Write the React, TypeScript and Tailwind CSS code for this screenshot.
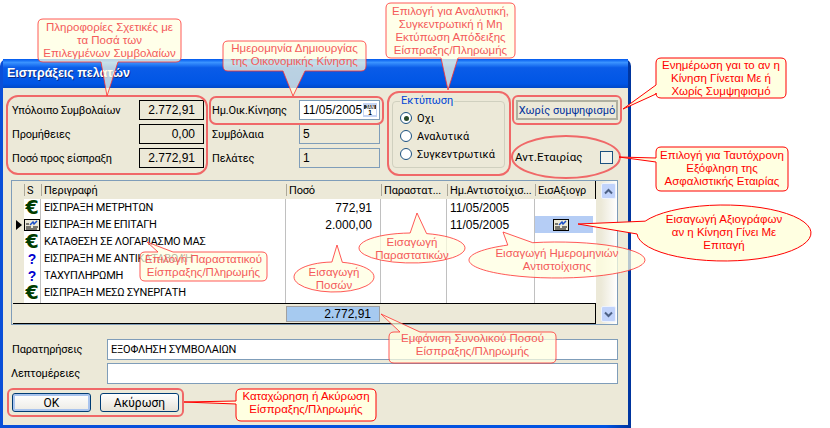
import React from 'react';

const FONT = "font-['Roboto','Liberation_Sans',sans-serif]";
const NUM = "font-['Liberation_Sans',Arial,sans-serif] text-[12px] tracking-normal";

type Side = 't' | 'b' | 'l';

// rounded box with a pointer, drawn as one outline
const box = (x1: number, y1: number, x2: number, y2: number, side: Side, b1: number, b2: number, ax: number, ay: number) => {
  const r = 5;
  const top = side === 't' ? `H${b1} L${ax},${ay} L${b2},${y1} ` : '';
  const bottom = side === 'b' ? `H${b2} L${ax},${ay} L${b1},${y2} ` : '';
  const left = side === 'l' ? `V${b2} L${ax},${ay} L${x1},${b1} ` : '';
  return `M${x1 + r},${y1} ${top}H${x2 - r} Q${x2},${y1} ${x2},${y1 + r} V${y2 - r} Q${x2},${y2} ${x2 - r},${y2} ${bottom}H${x1 + r} Q${x1},${y2} ${x1},${y2 - r} ${left}V${y1 + r} Q${x1},${y1} ${x1 + r},${y1} Z`;
};

// ellipse whose pointer leaves between angles a1 and a2 (degrees, clockwise on screen)
const oval = (cx: number, cy: number, rx: number, ry: number, a1: number, a2: number, ax: number, ay: number) => {
  const pt = (a: number) => `${cx + rx * Math.cos((a * Math.PI) / 180)},${cy + ry * Math.sin((a * Math.PI) / 180)}`;
  return `M${pt(a2)} A${rx},${ry} 0 1 1 ${pt(a1)} L${ax},${ay} Z`;
};

const softShapes = [
  box(38, 19, 181, 62, 'b', 101, 118, 107, 96),
  box(223, 41, 366, 71, 'b', 283, 305, 293, 96),
  box(386, 3, 515, 58, 'b', 441, 458, 448, 90),
  box(140, 252, 267, 281, 't', 158, 173, 147, 242),
  box(389, 332, 556, 363, 't', 400, 420, 381, 314),
  oval(412, 248, 53, 15, 268, 286, 417, 213),
  oval(334, 277, 40, 15, 267, 282, 337, 245),
  oval(557, 260, 88, 18, 236, 254, 503, 232),
];

const hardShapes = [
  box(656, 58, 786, 98, 'l', 85, 94, 623, 109),
  box(656, 147, 788, 191, 'l', 158, 162, 619, 157),
  box(236, 389, 376, 421, 'l', 401, 404, 184, 402),
  oval(724, 233, 87, 28, 178, 205, 578, 224),
];

const notes = [
  { pos: 'left-[38px] top-[21px] w-[143px]', soft: true, lines: ['Πληροφορίες Σχετικές με', 'τα Ποσά των', 'Επιλεγμένων Συμβολαίων'] },
  { pos: 'left-[223px] top-[42px] w-[143px]', soft: true, lines: ['Ημερομηνία Δημιουργίας', 'της Οικονομικής Κίνησης'] },
  { pos: 'left-[386px] top-[5px] w-[129px]', soft: true, lines: ['Επιλογή για Αναλυτική,', 'Συγκεντρωτική ή Μη', 'Εκτύπωση Απόδειξης', 'Είσπραξης/Πληρωμής'] },
  { pos: 'left-[656px] top-[59px] w-[130px]', soft: false, lines: ['Ενημέρωση γαι το αν η', 'Κίνηση Γίνεται Με ή', 'Χωρίς Συμψηφισμό'] },
  { pos: 'left-[656px] top-[149px] w-[132px]', soft: false, lines: ['Επιλογή για Ταυτόχρονη', 'Εξόφληση της', 'Ασφαλιστικής Εταιρίας'] },
  { pos: 'left-[637px] top-[213px] w-[174px]', soft: false, lines: ['Εισαγωγή Αξιογράφων', 'αν η Κίνηση Γίνει Με', 'Επιταγή'] },
  { pos: 'left-[469px] top-[247px] w-[176px]', soft: true, lines: ['Εισαγωγή Ημερομηνιών', 'Αντιστοίχισης'] },
  { pos: 'left-[359px] top-[236px] w-[106px]', soft: true, lines: ['Εισαγωγή', 'Παραστατικών'] },
  { pos: 'left-[294px] top-[266px] w-[80px]', soft: true, lines: ['Εισαγωγή', 'Ποσών'] },
  { pos: 'left-[140px] top-[253px] w-[127px]', soft: true, lines: ['Επιλογή Παραστατικού', 'Είσπραξης/Πληρωμής'] },
  { pos: 'left-[389px] top-[332px] w-[167px]', soft: true, lines: ['Εμφάνιση Συνολικού Ποσού', 'Είσπραξης/Πληρωμής'] },
  { pos: 'left-[236px] top-[390px] w-[140px]', soft: false, lines: ['Καταχώρηση ή Ακύρωση', 'Είσπραξης/Πληρωμής'] },
];

const rows = [
  { icon: 'euro', name: 'ΕΙΣΠΡΑΞΗ ΜΕΤΡΗΤΩΝ', amount: '772,91', date: '11/05/2005' },
  { icon: 'check', name: 'ΕΙΣΠΡΑΞΗ ΜΕ ΕΠΙΤΑΓΗ', amount: '2.000,00', date: '11/05/2005', current: true },
  { icon: 'euro', name: 'ΚΑΤΑΘΕΣΗ ΣΕ ΛΟΓΑΡΙΑΣΜΟ ΜΑΣ' },
  { icon: 'help', name: 'ΕΙΣΠΡΑΞΗ ΜΕ ΑΝΤΙΚΑΤΑΒΟΛΗ' },
  { icon: 'help', name: 'ΤΑΧΥΠΛΗΡΩΜΗ' },
  { icon: 'euro', name: 'ΕΙΣΠΡΑΞΗ ΜΕΣΩ ΣΥΝΕΡΓΑΤΗ' },
];

const CheckIcon = () => (
  <svg width="16" height="12" viewBox="0 0 16 12" className="block shrink-0">
    <rect x="0.5" y="0.5" width="15" height="11" fill="#ece9d8" stroke="#000" />
    <path d="M2 8h5M2 10h11M9 8h5M2 5h3" stroke="#000" />
    <path d="M6 6l3-3 1 2 3-3" stroke="#1d50c8" strokeWidth="1.5" fill="none" />
  </svg>
);

const CalendarIcon = () => (
  <svg width="14" height="14" viewBox="0 0 14 14" className="block shrink-0">
    <rect width="14" height="14" fill="#c5d5f5" />
    <rect x="1" y="2" width="12" height="10" fill="#fff" />
    <rect x="1" y="2" width="12" height="4" fill="#333" />
    <text x="7" y="5.6" textAnchor="middle" fontSize="4.5" fontWeight="700" fill="#fff" fontFamily="Liberation Sans">JAN</text>
    <text x="7" y="11.6" textAnchor="middle" fontSize="6.5" fontWeight="700" fill="#000" fontFamily="Liberation Sans">1</text>
  </svg>
);

const ValueRow = ({ label, value }: { label: string; value: string }) => (
  <div className="flex h-[20px] items-center justify-between">
    <span>{label}</span>
    <div className={`${NUM} flex h-[20px] w-[65px] items-center justify-end border border-black pr-[8px]`}>{value}</div>
  </div>
);

const InfoRow = ({ label, value }: { label: string; value: string }) => (
  <div className="flex h-[20px] items-center justify-between">
    <span>{label}</span>
    <div className={`${NUM} flex h-[20px] w-[81px] items-center border border-[#7f9db9] pl-[3px]`}>{value}</div>
  </div>
);

const Radio = ({ label, on }: { label: string; on?: boolean }) => (
  <div className="flex h-[18px] items-center gap-[5px] pl-[7px] tracking-normal">
    <div className="flex h-[12px] w-[12px] items-center justify-center rounded-full border border-[#1c5180] bg-white">
      {on && <div className="h-[5px] w-[5px] rounded-full bg-[#2a4a2a]" />}
    </div>
    <span>{label}</span>
  </div>
);

const HeadCell = ({ label }: { label: string }) => (
  <div className="flex h-full min-w-0 items-center whitespace-nowrap">
    <div className="mr-[2px] h-[12px] w-[1px] shrink-0 bg-[#aca899]" />
    {label}
  </div>
);

const ScrollButton = ({ up }: { up?: boolean }) => (
  <div className="flex h-[16px] w-[15px] items-center justify-center rounded-[2px] border border-[#eef3fd] bg-[#c1d3fb]">
    <svg width="9" height="7" viewBox="0 0 9 7">
      <path d={up ? 'M1 5.5L4.5 2L8 5.5' : 'M1 1.5L4.5 5L8 1.5'} stroke="#4d6185" strokeWidth="2" fill="none" />
    </svg>
  </div>
);

const App: React.FC = () => {
  return (
    <div className={`${FONT} relative h-[428px] w-[830px] overflow-hidden bg-white pt-[59px] text-[11px] leading-none tracking-[-0.2px] text-black`}>
      {/* παράθυρο */}
      <div className="flex h-[369px] w-[631px] flex-col rounded-t-[7px] bg-[linear-gradient(90deg,#0a4fd8_0%,#0054e3_96%,#00349c_100%)] px-[3px] pb-[3px]">
        <div className="flex h-[29px] shrink-0 items-center bg-[linear-gradient(180deg,#0058ee_0%,#3a93ff_12%,#0a5ce8_30%,#0055e5_85%,#0048c8_100%)] pl-[4px] font-['Liberation_Sans'] text-[12.5px] font-bold tracking-normal text-white [text-shadow:1px_1px_0_#0a2a80]">
          Εισπράξεις πελατών
        </div>
        <div className="flex flex-1 flex-col bg-[#ece9d8]">
          <div className="flex pl-[9px] pt-[12px]">
            <div className="flex w-[192px] flex-col gap-[4px]">
              <ValueRow label="Υπόλοιπο Συμβολαίων" value="2.772,91" />
              <ValueRow label="Προμήθειες" value="0,00" />
              <ValueRow label="Ποσό προς είσπραξη" value="2.772,91" />
            </div>
            <div className="ml-[8px] flex w-[168px] flex-col gap-[4px]">
              <div className="flex h-[20px] items-center justify-between">
                <span>Ημ.Οικ.Κίνησης</span>
                <div className={`${NUM} flex h-[20px] w-[81px] items-center justify-between border border-[#7f9db9] bg-white pl-[3px] pr-[2px]`}>
                  11/05/2005
                  <CalendarIcon />
                </div>
              </div>
              <InfoRow label="Συμβόλαια" value="5" />
              <InfoRow label="Πελάτες" value="1" />
            </div>
            <div className="relative ml-[12px] mt-[1px] h-[67px] w-[113px] rounded-[4px] border border-[#d0d0bf] pt-[7px]">
              <span className="absolute left-[7px] top-[-7px] bg-[#ece9d8] px-[1px] tracking-normal text-[#0046d5]">Εκτύπωση</span>
              <Radio label="Οχι" on />
              <Radio label="Αναλυτικά" />
              <Radio label="Συγκεντρωτικά" />
            </div>
            <div className="ml-[11px] flex w-[102px] flex-col">
              <div className="flex h-[20px] items-center justify-center border-2 border-double border-[#b0b0a0] whitespace-nowrap tracking-normal text-[#00309c]">
                Χωρίς συμψηφισμό
              </div>
              <div className="mt-[31px] flex items-center justify-between">
                <span className="-ml-[1px] text-[11.5px] tracking-normal">Αντ.Εταιρίας</span>
                <div className="mr-[5px] h-[13px] w-[13px] border border-[#1c5180] bg-[#f4f4ee]" />
              </div>
            </div>
          </div>

          {/* πίνακας */}
          <div className="ml-[8px] mt-[12px] flex h-[145px] w-[607px] border border-[#7f9db9] pl-[1px]">
            <div className="flex w-[583px] shrink-0 flex-col">
              <div className="grid h-[18px] shrink-0 grid-cols-[11px_17px_245px_95px_66px_88px_60px] items-center border-r border-black">
                <div />
                <HeadCell label="S" />
                <HeadCell label="Περιγραφή" />
                <HeadCell label="Ποσό" />
                <HeadCell label="Παραστατ..." />
                <HeadCell label="Ημ.Αντιστοίχισ..." />
                <HeadCell label="ΕισΑξιογρ" />
              </div>
              <div className="flex flex-1 flex-col bg-white">
                {rows.map((row) => (
                  <div key={row.name} className="flex h-[17px]">
                    <div className="flex w-[11px] items-center bg-[#ece9d8] pl-[3px]">
                      {row.current && <div className="border-y-[5px] border-l-[6px] border-y-transparent border-l-black" />}
                    </div>
                    <div className="flex w-[17px] items-center justify-center border-r border-[#c0c0c0]">
                      {row.icon === 'euro' && <span className="font-['DejaVu_Sans'] text-[19px] font-bold text-[#003c00]">€</span>}
                      {row.icon === 'help' && <span className="font-['Liberation_Sans'] text-[14px] font-bold text-[#0000d0]">?</span>}
                      {row.icon === 'check' && <CheckIcon />}
                    </div>
                    <div className="flex w-[245px] items-center border-r border-[#c0c0c0] pl-[3px]">{row.name}</div>
                    <div className={`${NUM} flex w-[95px] items-center justify-end border-r border-[#c0c0c0] pr-[8px]`}>{row.amount}</div>
                    <div className="w-[66px] border-r border-[#c0c0c0]" />
                    <div className={`${NUM} flex w-[88px] items-center border-r border-[#c0c0c0] pl-[3px]`}>{row.date}</div>
                    <div className={`flex w-[58px] items-center pl-[18px] ${row.current ? 'bg-[#b5cdf5]' : ''}`}>
                      {row.current && <CheckIcon />}
                    </div>
                  </div>
                ))}
                <div className="flex flex-1">
                  <div className="w-[11px] bg-[#ece9d8]" />
                  <div className="w-[17px] border-r border-[#c0c0c0]" />
                  <div className="w-[245px] border-r border-[#c0c0c0]" />
                  <div className="w-[95px] border-r border-[#c0c0c0]" />
                  <div className="w-[66px] border-r border-[#c0c0c0]" />
                  <div className="w-[88px] border-r border-[#c0c0c0]" />
                </div>
              </div>
              <div className="flex h-[21px] shrink-0 items-center border border-l-0 border-black pl-[273px]">
                <div className={`${NUM} flex h-[16px] w-[94px] items-center justify-end border border-[#a0a0a0] bg-[#a6caf0] pr-[8px]`}>2.772,91</div>
              </div>
            </div>
            <div className="ml-[5px] flex flex-1 flex-col justify-between bg-[linear-gradient(90deg,#ece9d8,#ffffff)] py-[2px]">
              <ScrollButton up />
              <ScrollButton />
            </div>
          </div>

          <div className="ml-[8px] mt-[14px] flex w-[607px] flex-col gap-[3px]">
            <div className="flex items-center justify-between">
              <span className="ml-[1px]">Παρατηρήσεις</span>
              <div className="flex h-[21px] w-[511px] items-center border border-[#7f9db9] bg-white pl-[3px]">ΕΞΟΦΛΗΣΗ ΣΥΜΒΟΛΑΙΩΝ</div>
            </div>
            <div className="flex items-center justify-between">
              <span>Λεπτομέρειες</span>
              <div className="h-[21px] w-[511px] border border-[#7f9db9] bg-white" />
            </div>
          </div>

          <div className="ml-[9px] mt-[9px] flex gap-[9px] text-[12px] tracking-normal">
            <div className="flex h-[19px] w-[79px] items-center justify-center rounded-[3px] border border-[#003c74] bg-[linear-gradient(180deg,#ffffff,#ecebe5)] shadow-[inset_0_0_0_2px_#a9c4ee]">OK</div>
            <div className="flex h-[19px] w-[79px] items-center justify-center rounded-[3px] border border-[#003c74] bg-[linear-gradient(180deg,#ffffff,#e6e3d8)]">Ακύρωση</div>
          </div>
        </div>
      </div>

      {/* σχόλια πάνω από το παράθυρο */}
      <svg width="830" height="428" className="pointer-events-none absolute inset-0">
        <g fill="none" stroke="#f06868" strokeWidth="2">
          <rect x="7" y="96" width="200" height="78" rx="11" />
          <rect x="210" y="97" width="173" height="27" rx="6" />
          <rect x="388" y="92" width="122" height="83" rx="11" />
          <rect x="513" y="96" width="108" height="28" rx="5" />
          <ellipse cx="566" cy="157" rx="54" ry="21" />
          <rect x="8" y="389" width="175" height="27" rx="5" />
        </g>
        {softShapes.map((d) => (
          <path key={d} d={d} fill="#ffffe1" fillOpacity="0.72" stroke="#ff3030" strokeOpacity="0.8" />
        ))}
        {hardShapes.map((d) => (
          <path key={d} d={d} fill="#ffffe1" stroke="#ff0000" />
        ))}
      </svg>
      {notes.map((note) => (
        <div
          key={note.lines[0]}
          className={`pointer-events-none absolute text-center font-['Liberation_Sans'] text-[11.5px] leading-[13px] tracking-normal whitespace-nowrap ${note.pos} ${note.soft ? 'text-[#f45a5a]' : 'text-[#ff0000]'}`}
        >
          {note.lines.map((line) => (
            <div key={line}>{line}</div>
          ))}
        </div>
      ))}
    </div>
  );
};

export default App;
